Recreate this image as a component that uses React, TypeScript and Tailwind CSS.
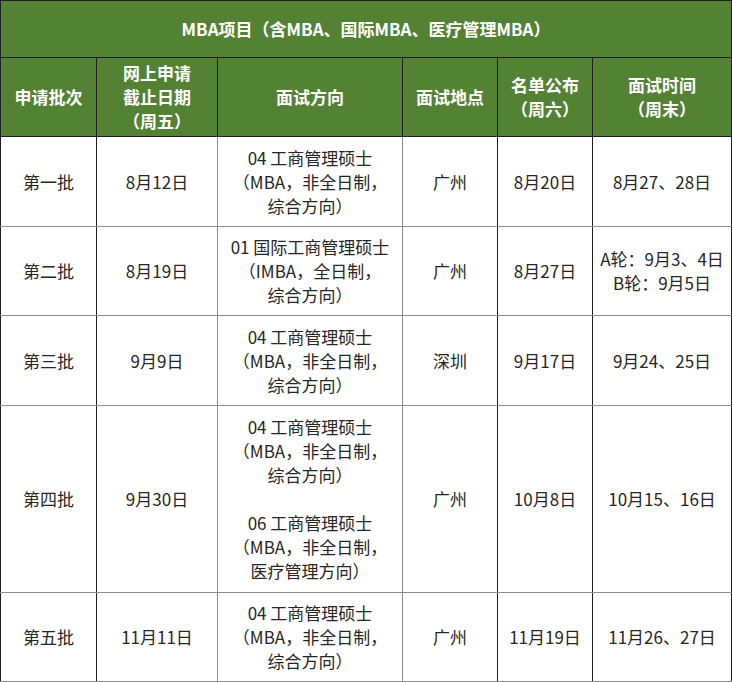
const rows = [
  {
    batch: "第一批",
    deadline: "8月12日",
    dirs: [["04 工商管理硕士", "（MBA，非全日制，", "综合方向）"]],
    place: "广州",
    publish: "8月20日",
    time: ["8月27、28日"],
    h: "h-[90px]",
  },
  {
    batch: "第二批",
    deadline: "8月19日",
    dirs: [["01 国际工商管理硕士", "（IMBA，全日制，", "综合方向）"]],
    place: "广州",
    publish: "8月27日",
    time: ["A轮：9月3、4日", "B轮：9月5日"],
    h: "h-[89px]",
  },
  {
    batch: "第三批",
    deadline: "9月9日",
    dirs: [["04 工商管理硕士", "（MBA，非全日制，", "综合方向）"]],
    place: "深圳",
    publish: "9月17日",
    time: ["9月24、25日"],
    h: "h-[90px]",
  },
  {
    batch: "第四批",
    deadline: "9月30日",
    dirs: [
      ["04 工商管理硕士", "（MBA，非全日制，", "综合方向）"],
      ["06 工商管理硕士", "（MBA，非全日制，", "医疗管理方向）"],
    ],
    place: "广州",
    publish: "10月8日",
    time: ["10月15、16日"],
    h: "h-[187px]",
  },
  {
    batch: "第五批",
    deadline: "11月11日",
    dirs: [["04 工商管理硕士", "（MBA，非全日制，", "综合方向）"]],
    place: "广州",
    publish: "11月19日",
    time: ["11月26、27日"],
    h: "h-[89px]",
  },
];

const head = "border border-[#1f1f1f] bg-[#548235] text-white font-bold text-center align-middle leading-6";
const cell = "border-y border-[#8c8c8c] text-center align-middle leading-6 text-[#262626]";

export default function App() {
  return (
    <div className="w-[732px] h-[682px] bg-white" style={{ fontFamily: '"Noto Sans CJK SC", "Noto Sans", sans-serif' }}>
      <table className="w-[731px] table-fixed border-collapse border border-[#1f1f1f] text-[17px]">
        <colgroup>
          <col className="w-[96px]" />
          <col className="w-[121px]" />
          <col className="w-[185px]" />
          <col className="w-[95px]" />
          <col className="w-[95px]" />
          <col className="w-[139px]" />
        </colgroup>
        <thead>
          <tr className="h-[57px]">
            <th colSpan={6} className={head}>MBA项目（含MBA、国际MBA、医疗管理MBA）</th>
          </tr>
          <tr className="h-[79px]">
            <th className={head}>申请批次</th>
            <th className={head}>
              网上申请<br />截止日期<br />（周五）
            </th>
            <th className={head}>面试方向</th>
            <th className={head}>面试地点</th>
            <th className={head}>
              名单公布<br />（周六）
            </th>
            <th className={head}>
              面试时间<br />（周末）
            </th>
          </tr>
        </thead>
        <tbody>
          {rows.map((r) => (
            <tr key={r.batch} className={r.h}>
              <td className={`${cell} border-l border-l-[#1f1f1f] border-r border-r-[#1f1f1f]`}>{r.batch}</td>
              <td className={`${cell} border-r border-r-[#8c8c8c]`}>{r.deadline}</td>
              <td className={`${cell} border-r border-r-[#8c8c8c]`}>
                <div className="flex flex-col gap-6">
                  {r.dirs.map((d, i) => (
                    <div key={i}>
                      {d.map((l) => (
                        <div key={l}>{l}</div>
                      ))}
                    </div>
                  ))}
                </div>
              </td>
              <td className={`${cell} border-r border-r-[#1f1f1f]`}>{r.place}</td>
              <td className={`${cell} border-r border-r-[#1f1f1f]`}>{r.publish}</td>
              <td className={`${cell} border-r border-r-[#1f1f1f]`}>
                {r.time.map((t) => (
                  <div key={t}>{t}</div>
                ))}
              </td>
            </tr>
          ))}
        </tbody>
      </table>
    </div>
  );
}
